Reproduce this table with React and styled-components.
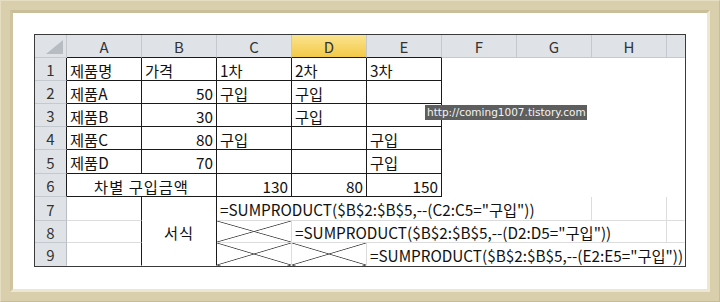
import React from 'react';
import styled, { createGlobalStyle, css } from 'styled-components';

const Global = createGlobalStyle`
	html, body { margin: 0; padding: 0; background: #fff; }
	body { font-family: "Noto Sans CJK KR", "Noto Sans", sans-serif; }
`;

const Frame = styled.div`
	width: 720px;
	height: 302px;
	box-sizing: border-box;
	padding: 9px;
	background: #d9cfac;
	border-top: 1px solid #e6dec2;
	border-left: 1px solid #e6dec2;
	border-right: 1px solid #c7bc96;
	border-bottom: 1px solid #c7bc96;
`;

const Mat = styled.div`
	height: 100%;
	box-sizing: border-box;
	border: 3px solid #ece6d2;
	border-top-color: #c9be99;
	border-left-color: #cfc4a0;
	background: #fff;
	padding: 21px 0 0 21px;
`;

const SheetWrap = styled.div`
	position: relative;
	width: max-content;
`;

const Sheet = styled.div`
	display: grid;
	grid-template-columns: 32px repeat(8, 75px) 18px;
	grid-template-rows: 23px 23px 23px 23px 23px 24px 23px 24px 22px 23px;
	border: 1px solid #3a3a3a;
	background: #fff;
	color: #111;
	font-size: 15.3px;
`;

const GRID = '#dcdcdc';
const BLACK = '#1a1a1a';

const Cell = styled.div`
	grid-column: ${(p) => p.$col + 1} / span ${(p) => p.$span};
	grid-row: ${(p) => p.$row + 1} / span ${(p) => p.$rows};
	box-sizing: border-box;
	display: flex;
	align-items: center;
	justify-content: ${(p) => p.$align};
	padding: 1px 3px 0 3px;
	white-space: nowrap;
	letter-spacing: ${(p) => (p.$wide ? '1px' : 'normal')};
	border-right: 1px solid ${(p) => p.$right};
	border-bottom: 1px solid ${(p) => p.$bottom};
	${(p) =>
		p.$cross &&
		css`
			background:
				linear-gradient(to top right, transparent calc(50% - 0.8px), #4a4a4a 50%, transparent calc(50% + 0.8px)),
				linear-gradient(to bottom right, transparent calc(50% - 0.8px), #4a4a4a 50%, transparent calc(50% + 0.8px));
		`}
`;

const HeadCell = styled.div`
	grid-column: ${(p) => p.$col + 1};
	grid-row: ${(p) => p.$row + 1};
	box-sizing: border-box;
	display: flex;
	align-items: center;
	justify-content: center;
	padding-top: 1px;
	color: #333;
	font-size: 15px;
	background: ${(p) => (p.$active ? 'linear-gradient(#fbe48f, #f3c947)' : '#dfe3e8')};
	border-right: 1px solid ${(p) => p.$right};
	border-bottom: 1px solid ${(p) => p.$bottom};
`;

const Corner = styled.div`
	grid-column: 1;
	grid-row: 1;
	position: relative;
	background: #dfe3e8;
	border-right: 1px solid #c4c9d0;
	border-bottom: 1px solid #c4c9d0;
	&::after {
		content: '';
		position: absolute;
		right: 3px;
		bottom: 3px;
		width: 17px;
		height: 14px;
		background: #b7bcc3;
		clip-path: polygon(100% 0, 100% 100%, 0 100%);
	}
`;

const Watermark = styled.div`
	position: absolute;
	left: 391px;
	top: 71px;
	width: 162px;
	height: 15px;
	box-sizing: border-box;
	padding-left: 2px;
	background: #5e5e5e;
	color: #f4f4f4;
	font-family: "DejaVu Sans", sans-serif;
	font-size: 10.5px;
	line-height: 15px;
	white-space: nowrap;
`;

const COLS = ['A', 'B', 'C', 'D', 'E', 'F', 'G', 'H', ''];

// black lines: A1:E6 all borders, B7:B9 box
const blackV = (r, c) => (r >= 1 && r <= 6 && c >= 0 && c <= 5) || (r >= 7 && (c === 1 || c === 2));
const blackH = (r, c) => r >= 0 && r <= 6 && c >= 1 && c <= 5;

const f = (col) => `=SUMPRODUCT($B$2:$B$5,--(${col}2:${col}5="구입"))`;

const body = [
	// row, col, span, rows, text, kind
	[1, 1, 1, 1, '제품명'], [1, 2, 1, 1, '가격'], [1, 3, 1, 1, '1차'], [1, 4, 1, 1, '2차'], [1, 5, 1, 1, '3차'],
	[2, 1, 1, 1, '제품A'], [2, 2, 1, 1, '50', 'r'], [2, 3, 1, 1, '구입'], [2, 4, 1, 1, '구입'], [2, 5, 1, 1, ''],
	[3, 1, 1, 1, '제품B'], [3, 2, 1, 1, '30', 'r'], [3, 3, 1, 1, ''], [3, 4, 1, 1, '구입'], [3, 5, 1, 1, ''],
	[4, 1, 1, 1, '제품C'], [4, 2, 1, 1, '80', 'r'], [4, 3, 1, 1, '구입'], [4, 4, 1, 1, ''], [4, 5, 1, 1, '구입'],
	[5, 1, 1, 1, '제품D'], [5, 2, 1, 1, '70', 'r'], [5, 3, 1, 1, ''], [5, 4, 1, 1, ''], [5, 5, 1, 1, '구입'],
	[6, 1, 2, 1, '차별 구입금액', 'c'], [6, 3, 1, 1, '130', 'r'], [6, 4, 1, 1, '80', 'r'], [6, 5, 1, 1, '150', 'r'],
	[7, 1, 1, 1, ''], [7, 2, 1, 3, '서식', 'c'], [7, 3, 5, 1, f('C')], [7, 8, 1, 1, ''], [7, 9, 1, 1, ''],
	[8, 1, 1, 1, ''], [8, 3, 1, 1, '', 'x'], [8, 4, 5, 1, f('D')], [8, 9, 1, 1, ''],
	[9, 1, 1, 1, ''], [9, 3, 1, 1, '', 'x'], [9, 4, 1, 1, '', 'x'], [9, 5, 5, 1, f('E')],
];

const edgeRight = (r, c, rows) => {
	if (c === 9) return 'transparent';
	return blackV(r, c) || blackV(r + rows - 1, c) ? BLACK : GRID;
};

const edgeBottom = (r, c) => {
	if (r === 9) return 'transparent';
	return blackH(r, c) ? BLACK : GRID;
};

export default function App() {
	return (
		<>
			<Global />
			<Frame>
				<Mat>
					<SheetWrap>
						<Sheet>
							<Corner />
							{COLS.map((name, i) => (
								<HeadCell
									key={'h' + i}
									$row={0}
									$col={i + 1}
									$active={name === 'D'}
									$right={i === 8 ? 'transparent' : '#c4c9d0'}
									$bottom={blackH(0, i + 1) ? BLACK : '#c4c9d0'}
								>
									{name}
								</HeadCell>
							))}
							{[1, 2, 3, 4, 5, 6, 7, 8, 9].map((r) => (
								<HeadCell
									key={'r' + r}
									$row={r}
									$col={0}
									$right={blackV(r, 0) ? BLACK : '#b9bfc7'}
									$bottom={r === 9 ? 'transparent' : '#c4c9d0'}
								>
									{r}
								</HeadCell>
							))}
							{body.map(([r, c, span, rows, text, kind]) => {
								const last = c + span - 1;
								return (
									<Cell
										key={r + '-' + c}
										$row={r}
										$col={c}
										$span={span}
										$rows={rows}
										$align={kind === 'r' ? 'flex-end' : kind === 'c' ? 'center' : 'flex-start'}
										$wide={kind === 'c'}
										$cross={kind === 'x'}
										$right={edgeRight(r, last, rows)}
										$bottom={edgeBottom(r + rows - 1, c)}
									>
										{text}
									</Cell>
								);
							})}
						</Sheet>
						<Watermark>http://coming1007.tistory.com</Watermark>
					</SheetWrap>
				</Mat>
			</Frame>
		</>
	);
}
